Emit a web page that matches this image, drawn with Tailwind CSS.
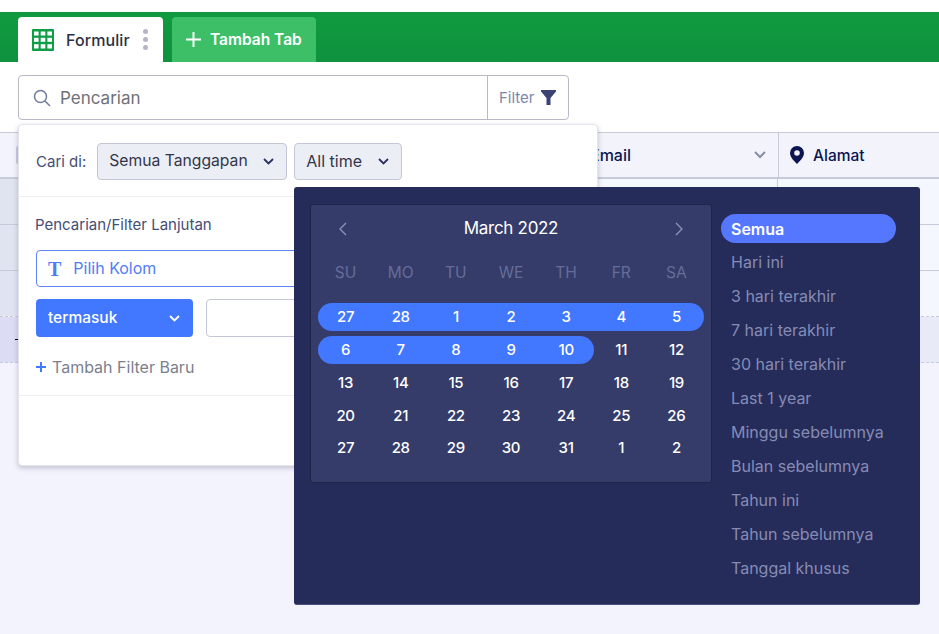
<!doctype html>
<html><head><meta charset="utf-8"><script src="https://cdn.jsdelivr.net/npm/@tailwindcss/browser@4"></script></head>
<body class="m-0">
<div class="relative w-[939px] h-[634px] overflow-hidden bg-[#f3f3fe] font-['Inter',sans-serif]">
  <div class="h-[12px] bg-white"></div>
  <!-- tab bar -->
  <div class="h-[50px] bg-gradient-to-b from-[#109a3f] to-[#0f923e] flex items-end pl-[18px] gap-[9px]">
    <div class="w-[145px] h-[45px] bg-white rounded-t-[4px] flex items-center pl-[14px]">
      <svg width="22" height="22" viewBox="0 0 22 22" class="shrink-0"><rect width="22" height="22" rx="1" fill="#0f9d46"/><g fill="#fff"><rect x="2" y="2.5" width="4.6" height="4"/><rect x="8.7" y="2.5" width="4.6" height="4"/><rect x="15.4" y="2.5" width="4.6" height="4"/><rect x="2" y="8.8" width="4.6" height="4"/><rect x="8.7" y="8.8" width="4.6" height="4"/><rect x="15.4" y="8.8" width="4.6" height="4"/><rect x="2" y="15.2" width="4.6" height="4.3"/><rect x="8.7" y="15.2" width="4.6" height="4.3"/><rect x="15.4" y="15.2" width="4.6" height="4.3"/></g></svg>
      <span class="ml-[12px] pt-[1px] text-[16px] font-medium text-[#2b3044] tracking-[0.1px]">Formulir</span>
      <div class="ml-[13px] flex flex-col gap-[3px]"><i class="block w-[5px] h-[5px] rounded-full bg-[#b5b5c9]"></i><i class="block w-[5px] h-[5px] rounded-full bg-[#b5b5c9]"></i><i class="block w-[5px] h-[5px] rounded-full bg-[#b5b5c9]"></i></div>
    </div>
    <div class="w-[144px] h-[45px] bg-[#3dbf68] rounded-t-[4px] flex items-center pl-[14px]">
      <svg width="15" height="15" viewBox="0 0 15 15"><path d="M7.5 0v15M0 7.5h15" stroke="#fff" stroke-width="2"/></svg>
      <span class="ml-[9px] pt-[1px] text-[15.5px] font-semibold text-white">Tambah Tab</span>
    </div>
  </div>
  <!-- search toolbar -->
  <div class="h-[70px] bg-white pt-[13px] pl-[18px]">
    <div class="w-[551px] h-[45px] border border-[#b9b9ca] rounded-[4px] flex items-center">
      <div class="w-[468px] h-full flex items-center pl-[14px]">
        <svg width="18" height="18" viewBox="0 0 18 18" fill="none" stroke="#6f7aa0" stroke-width="1.5"><circle cx="7.5" cy="7.5" r="6"/><path d="M12 12l5 5"/></svg>
        <span class="ml-[9px] pt-[2px] text-[17px] text-[#6f7178]">Pencarian</span>
      </div>
      <div class="flex-1 h-full border-l border-[#b9b9ca] flex items-center pl-[11px]">
        <span class="pt-[1px] text-[15px] text-[#7c86ad]">Filter</span>
        <svg width="15" height="15" viewBox="0 0 15 15" class="ml-[6px]"><path d="M0 0h15v1.5L9.5 8v7h-4V8L0 1.5z" fill="#3b4372"/></svg>
      </div>
    </div>
  </div>
  <!-- table -->
  <div class="h-[47px] bg-[#f2f3fb] border-t border-b-2 border-[#c6cad9] flex items-center">
    <div class="w-[778px] h-full flex items-center relative">
      <div class="absolute left-[16px] top-[13px] w-[16px] h-[18px] rounded-[2px] bg-[#c9cede]"></div>
      <span class="ml-[590px] text-[16px] font-medium text-[#0a1551]">Email</span>
      <svg width="12" height="8" viewBox="0 0 12 8" class="ml-auto mr-[12px]" fill="none" stroke="#8a8fa8" stroke-width="2"><path d="M1 1l5 5 5-5"/></svg>
    </div>
    <div class="flex-1 h-full border-l border-[#c6cad9] flex items-center pl-[11px]">
      <svg width="14" height="18" viewBox="0 0 14 18"><path fill-rule="evenodd" d="M7 0a7 7 0 0 1 7 7c0 4-4 8-7 11C4 15 0 11 0 7a7 7 0 0 1 7-7zm0 4.2a2.8 2.8 0 1 0 0 5.6 2.8 2.8 0 0 0 0-5.6z" fill="#0a1551"/></svg>
      <span class="ml-[9px] pt-[1px] text-[15.5px] font-medium text-[#0a1551]">Alamat</span>
    </div>
  </div>
  <div class="relative">
    <div class="h-[46px] bg-[#f5f7ff] border-b border-[#c6cad9] flex"><div class="w-[18px] bg-[#dfe4f0]"></div><div class="ml-[759px] border-l border-[#c6cad9]"></div></div>
    <div class="h-[46px] bg-[#f5f7ff] border-b border-[#c6cad9] flex"><div class="w-[18px] bg-[#dfe4f0]"></div></div>
    <div class="h-[46px] bg-[#f5f7ff] border-b border-dashed border-[#c6cad9] flex"><div class="w-[18px] bg-[#e0e4f1]"></div></div>
    <div class="h-[46px] bg-[#e9eaf7] border-b border-dashed border-[#c6cad9] flex"><div class="w-[18px] bg-[#dcdcf5] flex items-center"><span class="ml-[15px] block w-[3px] h-px bg-black"></span></div></div>
  </div>

  <!-- search popover -->
  <div class="absolute left-[18px] top-[124px] w-[580px] h-[342px] bg-white rounded-[4px] border border-[#e4e4ec] shadow-[0_2px_5px_rgba(40,40,70,0.25)]">
    <div class="h-[72px] border-b border-[#eeeef5] flex items-center pl-[17px] pt-[2px]">
      <span class="pt-[1px] text-[15px] text-[#454e75]">Cari di:</span>
      <div class="ml-[11px] w-[190px] h-[37px] rounded-[4px] bg-[#eceef6] border border-[#c3c6d6] flex items-center pl-[11px]">
        <span class="-mt-[1px] text-[15.7px] text-[#33364a]">Semua Tanggapan</span>
        <svg width="11" height="7" viewBox="0 0 11 7" class="ml-auto mr-[12px] -mt-[1px]" fill="none" stroke="#2a3160" stroke-width="1.8"><path d="M1 1l4.5 4.5L10 1"/></svg>
      </div>
      <div class="ml-[7px] w-[108px] h-[37px] rounded-[4px] bg-[#eceef6] border border-[#c3c6d6] flex items-center pl-[11px]">
        <span class="-mt-[1px] text-[16px] text-[#33364a]">All time</span>
        <svg width="11" height="7" viewBox="0 0 11 7" class="ml-auto mr-[12px] -mt-[1px]" fill="none" stroke="#2a3160" stroke-width="1.8"><path d="M1 1l4.5 4.5L10 1"/></svg>
      </div>
    </div>
    <div class="pl-[17px]">
      <div class="mt-[19px] h-[18px] leading-[18px] text-[15px] text-[#454e75] -ml-px">Pencarian/Filter Lanjutan</div>
      <div class="mt-[16px] w-[540px] h-[37px] rounded-[4px] border border-[#5b85f5] flex items-center pl-[11px]">
        <span class="font-['Liberation_Serif',serif] font-bold text-[20px] leading-none text-[#4f7df3]">T</span>
        <span class="ml-[12px] -mt-[1px] text-[16px] text-[#4f7df3]">Pilih Kolom</span>
      </div>
      <div class="mt-[12px] flex gap-[13px]">
        <div class="w-[157px] h-[38px] rounded-[4px] bg-[#4277ff] flex items-center pl-[12px]">
          <span class="text-[15.5px] font-medium text-white">termasuk</span>
          <svg width="11" height="7" viewBox="0 0 11 7" class="ml-auto mr-[13px]" fill="none" stroke="#fff" stroke-width="1.8"><path d="M1 1l4.5 4.5L10 1"/></svg>
        </div>
        <div class="w-[370px] h-[38px] rounded-[4px] border border-[#c3c6d6]"></div>
      </div>
      <div class="mt-[20px] h-[20px] flex items-center">
        <svg width="10" height="10" viewBox="0 0 10 10"><path d="M5 0v10M0 5h10" stroke="#4277ff" stroke-width="2"/></svg>
        <span class="ml-[6px] text-[16px] text-[#7b7f8e]">Tambah Filter Baru</span>
      </div>
    </div>
    <div class="mt-[18px] border-t border-[#eeeef5]"></div>
  </div>

  <!-- date picker -->
  <div class="absolute left-[294px] top-[187px] w-[626px] h-[418px] bg-[#252c5a] rounded-[3px] border-b border-[#4a5185] flex pl-[16px] pt-[17px]">
    <div class="w-[402px] h-[279px] bg-[#353c69] rounded-[3px] border border-[#1f2547] pl-[7px]">
      <div class="h-[48px] flex items-center justify-between pl-[20px] pr-[20px] mr-[7px]">
        <svg width="9" height="14" viewBox="0 0 9 14" fill="none" stroke="#9096b5" stroke-width="1.3"><path d="M8 1L2 7l6 6"/></svg>
        <span class="text-[17px] text-white tracking-[-0.3px]">March 2022</span>
        <svg width="9" height="14" viewBox="0 0 9 14" fill="none" stroke="#9096b5" stroke-width="1.3"><path d="M1 1l6 6-6 6"/></svg>
      </div>
      <div class="w-[386px] flex text-center text-[15.5px] text-[#666d99] h-[40px] items-center">
        <span class="flex-1">SU</span><span class="flex-1">MO</span><span class="flex-1">TU</span><span class="flex-1">WE</span><span class="flex-1">TH</span><span class="flex-1">FR</span><span class="flex-1">SA</span>
      </div>
      <div class="mt-[10px] w-[386px] flex flex-col gap-[4.75px] text-[15px] font-medium text-white text-center tracking-[-0.3px]">
        <div class="h-[28px] pt-[1px] rounded-full bg-[#4277ff] flex items-center"><span class="flex-1">27</span><span class="flex-1">28</span><span class="flex-1">1</span><span class="flex-1">2</span><span class="flex-1">3</span><span class="flex-1">4</span><span class="flex-1">5</span></div>
        <div class="h-[28px] pt-[1px] flex items-center relative"><div class="absolute left-0 top-0 w-[276px] h-[28px] rounded-full bg-[#4277ff]"></div><span class="flex-1 relative">6</span><span class="flex-1 relative">7</span><span class="flex-1 relative">8</span><span class="flex-1 relative">9</span><span class="flex-1 relative">10</span><span class="flex-1 relative">11</span><span class="flex-1 relative">12</span></div>
        <div class="h-[28px] pt-[1px] flex items-center"><span class="flex-1">13</span><span class="flex-1">14</span><span class="flex-1">15</span><span class="flex-1">16</span><span class="flex-1">17</span><span class="flex-1">18</span><span class="flex-1">19</span></div>
        <div class="h-[28px] pt-[1px] flex items-center"><span class="flex-1">20</span><span class="flex-1">21</span><span class="flex-1">22</span><span class="flex-1">23</span><span class="flex-1">24</span><span class="flex-1">25</span><span class="flex-1">26</span></div>
        <div class="h-[28px] pt-[1px] flex items-center"><span class="flex-1">27</span><span class="flex-1">28</span><span class="flex-1">29</span><span class="flex-1">30</span><span class="flex-1">31</span><span class="flex-1">1</span><span class="flex-1">2</span></div>
      </div>
    </div>
    <div class="ml-[9px] w-[175px] mt-[10px] flex flex-col text-[16px] text-[#858bb5]">
      <div class="h-[29px] mb-[2px] rounded-full bg-[#5577ff] text-white font-semibold flex items-center pl-[10px]">Semua</div>
      <div class="h-[34px] pl-[10px] flex items-center">Hari ini</div>
      <div class="h-[34px] pl-[10px] flex items-center">3 hari terakhir</div>
      <div class="h-[34px] pl-[10px] flex items-center">7 hari terakhir</div>
      <div class="h-[34px] pl-[10px] flex items-center">30 hari terakhir</div>
      <div class="h-[34px] pl-[10px] flex items-center">Last 1 year</div>
      <div class="h-[34px] pl-[10px] flex items-center">Minggu sebelumnya</div>
      <div class="h-[34px] pl-[10px] flex items-center">Bulan sebelumnya</div>
      <div class="h-[34px] pl-[10px] flex items-center">Tahun ini</div>
      <div class="h-[34px] pl-[10px] flex items-center">Tahun sebelumnya</div>
      <div class="h-[34px] pl-[10px] flex items-center">Tanggal khusus</div>
    </div>
  </div>
</div>
</body></html>
